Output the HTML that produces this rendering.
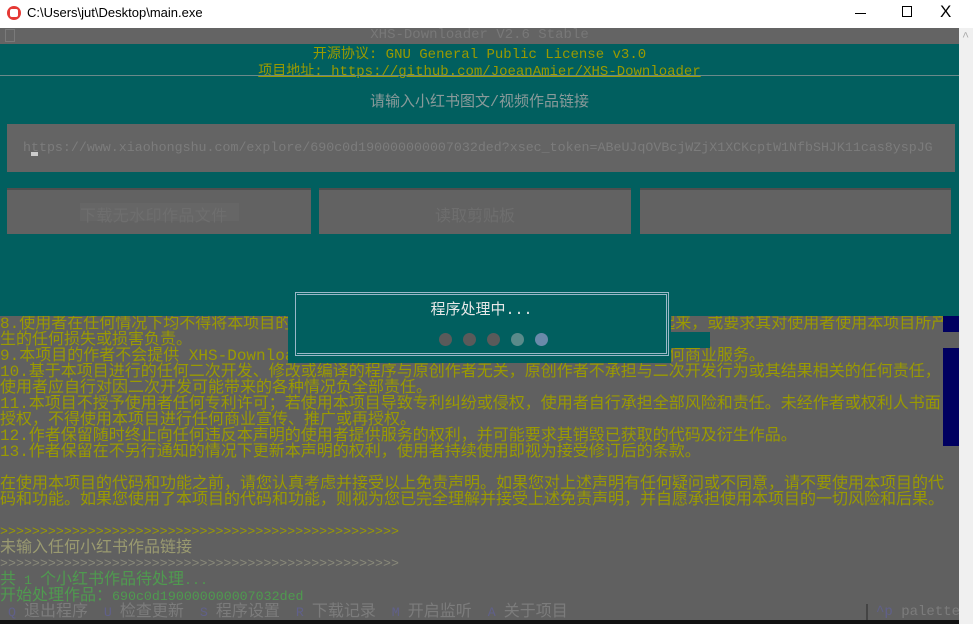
<!DOCTYPE html><html><head><meta charset="utf-8"><style>
*{margin:0;padding:0;box-sizing:border-box}
body{width:973px;height:624px;overflow:hidden;background:#606060;position:relative;font-family:"Liberation Mono","Noto Sans CJK SC",monospace;font-size:13.3px}
.a{position:absolute;white-space:nowrap}
.y{color:#9a9a00}
.c{font-size:16px}
.L{height:16px;line-height:16px;white-space:nowrap;overflow:visible}
</style></head><body>
<div class="a" style="left:0;top:0;width:973px;height:28px;background:#fff"></div>
<div class="a" style="left:7px;top:6px;width:14px;height:14px;border-radius:50%;background:#e53935"></div>
<div class="a" style="left:10px;top:9px;width:8px;height:8px;border-radius:2px;background:#fff"></div>
<div class="a" style="left:27px;top:5px;font:13px 'Liberation Sans',sans-serif;color:#000">C:\Users\jut\Desktop\main.exe</div>
<div class="a" style="left:855px;top:13px;width:11px;height:1px;background:#000"></div>
<div class="a" style="left:902px;top:6px;width:10px;height:11px;border:1px solid #000"></div>
<div class="a" style="left:940px;top:2px;font:17px 'Liberation Sans',sans-serif;color:#000">X</div>
<div class="a" style="left:959px;top:28px;width:14px;height:596px;background:#f0f0f0"></div>
<div class="a" style="left:962px;top:30px;color:#aaa;font-size:12px">^</div>
<div class="a" style="left:0;top:28px;width:959px;height:16px;background:#646464"></div>
<div class="a" style="left:5px;top:29px;width:10px;height:13px;border:1px solid #7a7a7a"></div>
<div class="a" style="left:0;top:27px;width:959px;text-align:center;color:#787878;font-size:14px">XHS-Downloader V2.6 Stable</div>
<div class="a" style="left:0;top:44px;width:959px;height:272px;background:#015f5f"></div>
<div class="a y" style="left:0;top:43px;width:959px;text-align:center;font-size:14px">开源协议: GNU General Public License v3.0</div>
<div class="a y" style="left:0;top:60px;width:959px;text-align:center;text-decoration:underline;font-size:14px">项目地址: https://github.com/JoeanAmier/XHS-Downloader</div>
<div class="a" style="left:0;top:75px;width:959px;height:1px;background:#6a8a8a"></div>
<div class="a" style="left:0;top:90px;width:959px;text-align:center;color:#8a9a9a;font-size:15px">请输入小红书图文/视频作品链接</div>
<div class="a" style="left:7px;top:124px;width:948px;height:48px;background:#646464"></div>
<div class="a" style="left:23px;top:140px;color:#7c7c7c;font-size:13.3px;letter-spacing:0px">https://www.xiaohongshu.com/explore/690c0d190000000007032ded?xsec_token=ABeUJqOVBcjWZjX1XCKcptW1NfbSHJK11cas8yspJG</div>
<div class="a" style="left:31px;top:152px;width:7px;height:4px;background:#ccc"></div>
<div class="a" style="left:7px;top:188px;width:304px;height:46px;background:#626262;border-top:2px solid #4e4e4e"></div>
<div class="a" style="left:319px;top:188px;width:312px;height:46px;background:#626262;border-top:2px solid #4e4e4e"></div>
<div class="a" style="left:640px;top:188px;width:311px;height:46px;background:#626262;border-top:2px solid #4e4e4e"></div>
<div class="a" style="left:80px;top:203px;width:159px;height:18px;background:#666"></div>
<div class="a" style="left:80px;top:202px;color:#6e6e6e;font-size:16px;letter-spacing:0.4px">下载无水印作品文件</div>
<div class="a" style="left:435px;top:202px;color:#6e6e6e;font-size:16px">读取剪贴板</div>
<div class="a y" style="left:0;top:316px;width:959px;overflow:hidden;height:288px">
<div class="L c">8.使用者在任何情况下均不得将本项目的作者、贡献者或其他相关方与使用者的使用行为联系起来，或要求其对使用者使用本项目所产</div>
<div class="L c">生的任何损失或损害负责。</div>
<div class="L c">9.本项目的作者不会提供 XHS-Downloader 项目的付费版本，也不会提供与本项目相关的任何商业服务。</div>
<div class="L c">10.基于本项目进行的任何二次开发、修改或编译的程序与原创作者无关，原创作者不承担与二次开发行为或其结果相关的任何责任，</div>
<div class="L c">使用者应自行对因二次开发可能带来的各种情况负全部责任。</div>
<div class="L c">11.本项目不授予使用者任何专利许可；若使用本项目导致专利纠纷或侵权，使用者自行承担全部风险和责任。未经作者或权利人书面</div>
<div class="L c">授权，不得使用本项目进行任何商业宣传、推广或再授权。</div>
<div class="L c">12.作者保留随时终止向任何违反本声明的使用者提供服务的权利，并可能要求其销毁已获取的代码及衍生作品。</div>
<div class="L c">13.作者保留在不另行通知的情况下更新本声明的权利，使用者持续使用即视为接受修订后的条款。</div>
<div class="L"></div>
<div class="L c">在使用本项目的代码和功能之前，请您认真考虑并接受以上免责声明。如果您对上述声明有任何疑问或不同意，请不要使用本项目的代</div>
<div class="L c">码和功能。如果您使用了本项目的代码和功能，则视为您已完全理解并接受上述免责声明，并自愿承担使用本项目的一切风险和后果。</div>
<div class="L"></div>
<div class="L">&gt;&gt;&gt;&gt;&gt;&gt;&gt;&gt;&gt;&gt;&gt;&gt;&gt;&gt;&gt;&gt;&gt;&gt;&gt;&gt;&gt;&gt;&gt;&gt;&gt;&gt;&gt;&gt;&gt;&gt;&gt;&gt;&gt;&gt;&gt;&gt;&gt;&gt;&gt;&gt;&gt;&gt;&gt;&gt;&gt;&gt;&gt;&gt;&gt;&gt;</div>
<div class="L c" style="color:#9a9a70">未输入任何小红书作品链接</div>
<div class="L" style="color:#8a8a7a">&gt;&gt;&gt;&gt;&gt;&gt;&gt;&gt;&gt;&gt;&gt;&gt;&gt;&gt;&gt;&gt;&gt;&gt;&gt;&gt;&gt;&gt;&gt;&gt;&gt;&gt;&gt;&gt;&gt;&gt;&gt;&gt;&gt;&gt;&gt;&gt;&gt;&gt;&gt;&gt;&gt;&gt;&gt;&gt;&gt;&gt;&gt;&gt;&gt;&gt;</div>
<div class="L" style="color:#4f9a4f"><span class="c">共</span> 1 <span class="c">个小红书作品待处理</span>...</div>
<div class="L" style="color:#4f9a4f"><span class="c">开始处理作品：</span>690c0d190000000007032ded</div>
</div>
<div class="a" style="left:943px;top:316px;width:16px;height:16px;background:#000060"></div>
<div class="a" style="left:943px;top:348px;width:16px;height:98px;background:#000060"></div>
<div class="a L" style="left:0;top:604px;width:959px;background:#606060;color:#7c7c7c"><span style="color:#60608a">&nbsp;Q</span> <span class="c">退出程序</span> <span style="color:#60608a">&nbsp;U</span> <span class="c">检查更新</span> <span style="color:#60608a">&nbsp;S</span> <span class="c">程序设置</span> <span style="color:#60608a">&nbsp;R</span> <span class="c">下载记录</span> <span style="color:#60608a">&nbsp;M</span> <span class="c">开启监听</span> <span style="color:#60608a">&nbsp;A</span> <span class="c">关于项目</span></div>
<div class="a" style="left:866px;top:604px;width:2px;height:16px;background:#444"></div>
<div class="a" style="left:876px;top:604px;color:#7c7c7c;line-height:16px;font-size:14px"><span style="color:#60608a">^p</span> palette</div>
<div class="a" style="left:0;top:620px;width:959px;height:4px;background:#111"></div>
<div class="a" style="left:288px;top:290px;width:383px;height:73px;background:#015f5f"></div>
<div class="a" style="left:671px;top:332px;width:39px;height:16px;background:#015f5f"></div>
<div class="a" style="left:295px;top:292px;width:374px;height:64px;border:1px solid #9ab8c8"></div>
<div class="a" style="left:297px;top:294px;width:370px;height:60px;border:1px solid #9ab8c8;border-left:none"></div>
<div class="a" style="left:293px;top:298px;width:377px;text-align:center;color:#e8e8e8;font-size:15px">程序处理中...</div>
<div class="a" style="left:439px;top:333px;width:13px;height:13px;border-radius:50%;background:#5a5a5a"></div>
<div class="a" style="left:463px;top:333px;width:13px;height:13px;border-radius:50%;background:#5a5a5a"></div>
<div class="a" style="left:487px;top:333px;width:13px;height:13px;border-radius:50%;background:#5a5a5a"></div>
<div class="a" style="left:511px;top:333px;width:13px;height:13px;border-radius:50%;background:#5a8a8a"></div>
<div class="a" style="left:535px;top:333px;width:13px;height:13px;border-radius:50%;background:#6a8aaa"></div>
</body></html>
